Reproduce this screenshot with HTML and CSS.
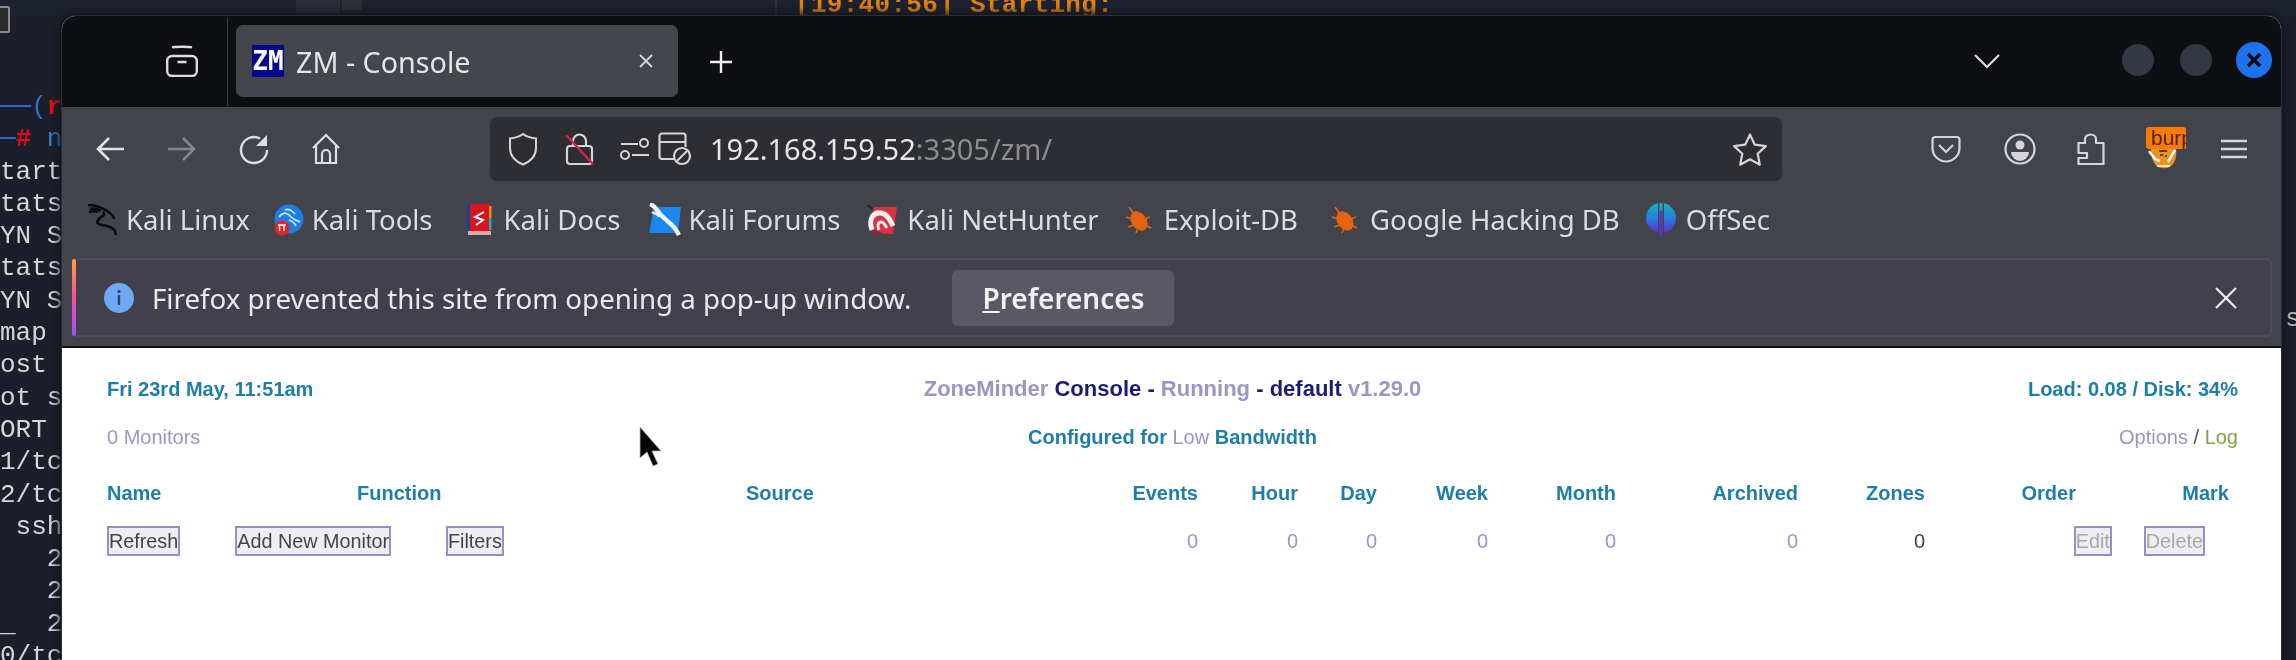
FILE: index.html
```html
<!DOCTYPE html>
<html lang="en">
<head>
<meta charset="utf-8">
<title>ZM - Console</title>
<link rel="stylesheet" href="styles.css">
</head>
<body>
<div class="desktop">
  <div class="term-top">
    <span class="term-box"></span>
    <span class="term-blot-a"></span>
    <span class="term-blot-b"></span>
    <span class="term-log">[19:40:56] Starting:</span>
  </div>
  <pre class="terminal"><span class="tl-blue">┌──(</span><span class="tl-red">root</span>
<span class="tl-blue">└─</span><span class="tl-red">#</span> <span class="tl-cmd">nmap</span>
Starting
Stats: 0
SYN Stealth
Stats: 0
SYN Stealth
Nmap scan
Host is
Not shown
PORT
21/tcp
22/tcp
| ssh-hostkey
|   2048
|   256
|_  256
80/tcp</pre>
  <span class="term-edge">s</span>

  <main class="window">
    <header class="tabbar">
      <svg class="ico-view" width="32" height="32" viewBox="0 0 32 32"><path d="M6 2.500C8 1.500 24 1.500 26 2.500" fill="none" stroke="#dcdcdc" stroke-width="2.400"/><rect x="1.200" y="11" width="29.600" height="20" rx="5" fill="none" stroke="#dcdcdc" stroke-width="2.400"/><path d="M11.500 17h9" stroke="#dcdcdc" stroke-width="2.400"/></svg>
      <span class="tab-sep"></span>
      <div class="tab">
        <span class="zm-icon">ZM</span>
        <span class="tab-title">ZM - Console</span>
        <svg class="tab-x" width="16" height="16" viewBox="0 0 16 16"><path d="M2 2l12 12M14 2L2 14" stroke="#d4d4d6" stroke-width="1.800"/></svg>
      </div>
      <svg class="tab-plus" width="24" height="24" viewBox="0 0 24 24"><path d="M12 1v22M1 12h22" stroke="#f0f0f0" stroke-width="2.400"/></svg>
      <svg class="tab-chevron" width="28" height="16" viewBox="0 0 28 16"><path d="M2 2l12 12L26 2" fill="none" stroke="#dedede" stroke-width="2.200"/></svg>
      <span class="win-dot"></span>
      <span class="win-dot win-dot-second"></span>
      <span class="win-close">
        <svg width="16" height="16" viewBox="0 0 16 16"><path d="M2 2l12 12M14 2L2 14" stroke="#0a0d18" stroke-width="3.600"/></svg>
      </span>
    </header>

    <div class="chrome">
      <nav class="navbar">
        <div class="nav-btns">
          <svg width="30" height="28" viewBox="0 0 30 28"><path d="M29 14H3M14 3L3 14l11 11" fill="none" stroke="#e2e2e4" stroke-width="2.600"/></svg>
          <svg width="30" height="28" viewBox="0 0 30 28"><path d="M1 14h26M16 3l11 11-11 11" fill="none" stroke="#85868b" stroke-width="2.600"/></svg>
          <svg width="30" height="32" viewBox="0 0 30 32"><path d="M21 5.500A13 13 0 1 0 28 17" fill="none" stroke="#dedee0" stroke-width="2.400"/><path d="M28 2v11H17z" fill="#dedee0"/></svg>
          <svg width="30" height="32" viewBox="0 0 30 32"><path d="M2 15L15 2l13 13M5 12v18h20V12M11 30V21a4 4 0 0 1 8 0v9" fill="none" stroke="#dedee0" stroke-width="2.200"/></svg>
        </div>
        <div class="urlbar">
          <svg width="30" height="34" viewBox="0 0 30 34"><path d="M15 2C11 5 6 6 2 6.500V16C2 25 9 30 15 32.500 21 30 28 25 28 16V6.500C24 6 19 5 15 2Z" fill="none" stroke="#d5d5d8" stroke-width="2"/></svg>
          <svg class="u-lock" width="30" height="34" viewBox="0 0 30 34"><path d="M9 14V9a6.500 6.500 0 0 1 13 0v5" fill="none" stroke="#d5d5d8" stroke-width="2.200"/><rect x="3" y="14" width="25" height="18" rx="3" fill="none" stroke="#d5d5d8" stroke-width="2.200"/><path d="M2 3l27 29" stroke="#d81f50" stroke-width="2.400"/></svg>
          <svg class="u-perm" width="30" height="26" viewBox="0 0 30 26"><path d="M1 8h17M12 19h17" stroke="#d5d5d8" stroke-width="2.200"/><circle cx="24" cy="7" r="4" fill="none" stroke="#d5d5d8" stroke-width="2"/><circle cx="5" cy="19" r="4" fill="none" stroke="#d5d5d8" stroke-width="2"/></svg>
          <svg class="u-pop" width="34" height="34" viewBox="0 0 34 34"><path d="M16 27H4a2.500 2.500 0 0 1-2.500-2.500V4A2.500 2.500 0 0 1 4 1.500h21A2.500 2.500 0 0 1 27.500 4v11M2 10h25" fill="none" stroke="#d5d5d8" stroke-width="2.200"/><circle cx="24" cy="24" r="8" fill="none" stroke="#d5d5d8" stroke-width="2.200"/><path d="M19 29l10-10" stroke="#d5d5d8" stroke-width="2.200"/></svg>
          <span class="url"><span class="url-host">192.168.159.52</span>:3305/zm/</span>
          <svg class="u-star" width="36" height="34" viewBox="0 0 36 34"><path d="M18 2.500l4.800 10.200 11 1.400-8.100 7.600 2.100 11L18 27.300 8.200 32.700l2.100-11-8.100-7.600 11-1.400z" fill="none" stroke="#d5d5d8" stroke-width="2.200" stroke-linejoin="round"/></svg>
        </div>
        <div class="nav-tools">
          <svg class="t-pocket" width="30" height="28" viewBox="0 0 30 28"><path d="M4 2h22a2.500 2.500 0 0 1 2.500 2.500V13a13.500 13.500 0 0 1-27 0V4.500A2.500 2.500 0 0 1 4 2z" fill="none" stroke="#d5d5d8" stroke-width="2.200"/><path d="M8 10l7 7 7-7" fill="none" stroke="#d5d5d8" stroke-width="2.200"/></svg>
          <svg class="t-account" width="32" height="32" viewBox="0 0 32 32"><circle cx="16" cy="16" r="14.500" fill="none" stroke="#d5d5d8" stroke-width="2.200"/><circle cx="16" cy="12" r="4.500" fill="#d5d5d8"/><path d="M7 19h18a9 9 0 0 1-18 0z" fill="#d5d5d8"/></svg>
          <svg class="t-ext" width="28" height="32" viewBox="0 0 28 32"><path d="M1.500 10H8V6a5.500 4.500 0 0 1 11 0v4h7.500v21H1.500v-6H10v-5H1.500z" fill="none" stroke="#d5d5d8" stroke-width="2.200" stroke-linejoin="round"/></svg>
          <div class="burp">
            <svg class="burp-face" width="30" height="22" viewBox="0 0 30 22"><path d="M3 0h25c1 9-1 15-5 18-4 3-10 3-14 0C5 15 3 9 3 0z" fill="#e8951f"/><path d="M1 3l6 8 5 2M27 2l-7 12" fill="none" stroke="#f5f5f5" stroke-width="2.600"/><path d="M9 18h13" stroke="#ffe6b8" stroke-width="2"/><path d="M11 3h8M12 7h3M17 8h2" stroke="#6b3a00" stroke-width="2"/></svg>
            <span class="burp-badge"><span class="burp-text">burp</span></span>
          </div>
          <svg class="t-menu" width="26" height="20" viewBox="0 0 26 20"><path d="M0 2h26M0 10h26M0 18h26" stroke="#d5d5d8" stroke-width="2.400"/></svg>
        </div>
      </nav>

      <div class="bookmarks">
        <a class="bm bm-linux">
          <svg width="32" height="32" viewBox="0 0 32 32"><path d="M1 1C8 1 14 3 20 7c3 2 7 5 7 8M3 5c4-1 8 0 11 2M2 8c4-1 7-1 9 0M16 8c3 3-1 4-4 7-3 3-2 5 3 6 6 1 11 2 13 6l1 4" fill="none" stroke="#0a0a0d" stroke-width="2.600"/></svg>
          <span>Kali Linux</span>
        </a>
        <a class="bm bm-tools">
          <svg width="30" height="32" viewBox="0 0 30 32"><circle cx="15" cy="15" r="14.500" fill="#1b7fe3"/><path d="M5 13c5-6 9-4 12 0 3 3 5 3 9 5M11 6c4-2 7 1 10 4M15 16c3 1 6 3 7 6" fill="none" stroke="#d9e9fb" stroke-width="1.700"/><circle cx="8" cy="24" r="7.500" fill="#e02525"/><path d="M5.500 21v6M10 21v6M4 21h8" stroke="#fff" stroke-width="1.500"/></svg>
          <span>Kali Tools</span>
        </a>
        <a class="bm bm-docs">
          <svg width="26" height="32" viewBox="0 0 26 32"><rect x="1" y="0" width="4" height="30" fill="#1b3f8f"/><rect x="4" y="0" width="20" height="27" fill="#d7161b"/><rect x="23" y="2" width="2.500" height="12" fill="#e28a26"/><rect x="23" y="14" width="2.500" height="12" fill="#2fa0c0"/><rect x="2" y="27" width="23" height="4" fill="#d9a8a8"/><path d="M18 8l-9 5 8 3-7 5" fill="none" stroke="#fff" stroke-width="2"/></svg>
          <span>Kali Docs</span>
        </a>
        <a class="bm bm-forums">
          <svg width="34" height="34" viewBox="0 0 34 34"><path d="M7 4h27l-3 26H2z" fill="#1a86f0"/><path d="M3 1c4 1 6 5 10 10 4 4 7 7 12 11 3 3 5 6 7 10" fill="none" stroke="#f2f2f2" stroke-width="4.500"/><path d="M5 9c3 2 6 1 7 5" fill="none" stroke="#f2f2f2" stroke-width="2.400"/></svg>
          <span>Kali Forums</span>
        </a>
        <a class="bm bm-hunter">
          <svg width="32" height="32" viewBox="0 0 32 32"><path d="M8 3h23l-4 27H5z" fill="#d9323f"/><path d="M5 30l1-6 12 6z" fill="#8c2233"/><path d="M6 26C2 14 8 8 15 9c6 1 9 6 12 13" fill="none" stroke="#f2eeee" stroke-width="5"/><path d="M13 26c-2-4-1-8 2-8 3 0 4 3 6 6" fill="none" stroke="#f2eeee" stroke-width="3"/><path d="M2 1l4 4" stroke="#222" stroke-width="2"/></svg>
          <span>Kali NetHunter</span>
        </a>
        <a class="bm bm-exploit">
          <svg width="28" height="30" viewBox="0 0 28 30"><ellipse cx="15" cy="16" rx="7.500" ry="10.500" fill="#e8620f" transform="rotate(-35 15 16)"/><path d="M5 2l5 7M2 12l6 2M4 22l6-2M12 28l2-5M26 12l-5 2M27 23l-6-3" stroke="#d9651a" stroke-width="1.800"/></svg>
          <span>Exploit-DB</span>
        </a>
        <a class="bm bm-ghdb">
          <svg width="28" height="30" viewBox="0 0 28 30"><ellipse cx="15" cy="16" rx="7.500" ry="10.500" fill="#e8620f" transform="rotate(-35 15 16)"/><path d="M5 2l5 7M2 12l6 2M4 22l6-2M12 28l2-5M26 12l-5 2M27 23l-6-3" stroke="#d9651a" stroke-width="1.800"/></svg>
          <span>Google Hacking DB</span>
        </a>
        <a class="bm bm-offsec">
          <svg width="30" height="34" viewBox="0 0 30 34"><defs><linearGradient id="off" x1="0" y1="0" x2="0" y2="1"><stop offset="0" stop-color="#12b4c4"/><stop offset=".55" stop-color="#2a78dc"/><stop offset="1" stop-color="#6a2ad0"/></linearGradient></defs><ellipse cx="15" cy="15" rx="15" ry="15" fill="url(#off)"/><path d="M12 0h1.500v30H12zM16.500 0H18v30h-1.500z" fill="#42444c"/><path d="M14 8h2v26h-2z" fill="#6a2ad0"/></svg>
          <span>OffSec</span>
        </a>
      </div>

      <section class="infobar">
        <span class="info-accent"></span>
        <svg class="info-ico" width="30" height="30" viewBox="0 0 30 30"><circle cx="15" cy="15" r="15" fill="#6fa8f5"/><path d="M15 12v10" stroke="#3b3e55" stroke-width="2.400"/><circle cx="15" cy="8.500" r="1.600" fill="#3b3e55"/></svg>
        <span class="info-text">Firefox prevented this site from opening a pop-up window.</span>
        <button class="info-btn"><u>P</u>references</button>
        <svg class="info-x" width="24" height="24" viewBox="0 0 24 24"><path d="M2 2l20 20M22 2L2 22" stroke="#eeeeee" stroke-width="2.200"/></svg>
      </section>
    </div>

    <section class="page">
      <div class="row">
        <span class="cell-l blue b">Fri 23rd May, 11:51am</span>
        <span class="cell-c title"><span class="lilac">ZoneMinder</span> <span class="navy b">Console</span> <span class="navy b">-</span> <span class="lilac">Running</span> <span class="navy b">-</span> <span class="navy b">default</span> <span class="lilac">v1.29.0</span></span>
        <span class="cell-r blue b">Load: 0.08 / Disk: 34%</span>
      </div>
      <div class="row row-two">
        <span class="cell-l lilac">0 Monitors</span>
        <span class="cell-c blue b">Configured for <span class="lilac-n">Low</span> Bandwidth</span>
        <span class="cell-r"><span class="lilac">Options</span> <span class="grey">/</span> <span class="green">Log</span></span>
      </div>
      <div class="mon-grid">
        <span class="h">Name</span>
        <span class="h">Function</span>
        <span class="h">Source</span>
        <span class="h r">Events</span>
        <span class="h r">Hour</span>
        <span class="h r">Day</span>
        <span class="h r">Week</span>
        <span class="h r">Month</span>
        <span class="h r">Archived</span>
        <span class="h r">Zones</span>
        <span class="h r">Order</span>
        <span class="h r">Mark</span>

        <div class="actions">
          <button class="zbtn">Refresh</button>
          <button class="zbtn">Add New Monitor</button>
          <button class="zbtn">Filters</button>
        </div>
        <span class="v r">0</span>
        <span class="v r">0</span>
        <span class="v r">0</span>
        <span class="v r">0</span>
        <span class="v r">0</span>
        <span class="v r">0</span>
        <span class="v r dark">0</span>
        <div class="actions-end">
          <button class="zbtn off" disabled>Edit</button>
          <button class="zbtn off" disabled>Delete</button>
        </div>
      </div>
      <svg class="cursor" width="26" height="42" viewBox="0 0 26 42"><path d="M2 1v31l7-6 6 14 5-2-6-13h9z" fill="#060606" stroke="#b9b9b9" stroke-width=".8"/></svg>
    </section>
  </main>
</div>
</body>
</html>
```

FILE: styles.css
```css
* { box-sizing: border-box; }
html, body { margin: 0; padding: 0; }
body { width: 2296px; height: 660px; overflow: hidden; background: #1c1f2b; }

.desktop {
  position: relative;
  width: 2296px;
  height: 660px;
  overflow: hidden;
  background: #1c1f2b;
  filter: blur(0.6px);
}

/* Terminal behind the browser window */
.term-top { position: absolute; left: 0; top: 0; width: 100%; height: 16px; background: #1e2230; }
.term-box { position: absolute; left: -8px; top: 6px; width: 18px; height: 27px; border: 2px solid #8a8a8a; border-radius: 2px; background: #2a2a2a; }
.term-blot-a { position: absolute; left: 296px; top: 0; width: 44px; height: 16px; background: #2a2d38; }
.term-blot-b { position: absolute; left: 342px; top: 0; width: 20px; height: 10px; background: #2e3038; }
.term-log {
  position: absolute; left: 795px; top: -10px;
  font: bold 26px/30px "Liberation Mono", monospace;
  letter-spacing: .3px;
  color: #e0820f;
  white-space: pre;
}
.term-log::before { content: ""; position: absolute; left: -20px; top: 0; width: 2px; height: 30px; background: #2b2f3d; }
.terminal {
  position: absolute; left: -15.6px; top: 91px; margin: 0;
  font: 26px/32.3px "Liberation Mono", monospace;
  color: #d6d6d6;
}
.tl-blue { color: #2f6fd0; }
.tl-red { color: #e01010; font-weight: bold; }
.tl-cmd { color: #2b86c5; }
.term-edge { position: absolute; left: 2285px; top: 303px; font: 26px/32px "Liberation Mono", monospace; color: #bdbdbd; }

/* Browser window */
.window {
  position: absolute; left: 62px; top: 16px;
  width: 2219px; height: 660px;
  display: flex; flex-direction: column;
  border-radius: 14px 14px 0 0;
  overflow: hidden;
  background: #fff;
  box-shadow: 0 0 0 1px #2b2d38, 0 0 8px 3px #12141c;
  font-family: "Noto Sans", sans-serif;
}
.tabbar {
  height: 91px; flex: none;
  display: flex; align-items: center;
  padding-left: 104px;
  background: #0e0f13;
}
.ico-view { flex: none; margin-top: -2px; }
.tab-sep { width: 1px; height: 88px; margin-left: 29px; background: #3a3b41; flex: none; }
.tab {
  width: 442px; height: 72px; margin-left: 8px; margin-top: -1px;
  display: flex; align-items: center;
  padding-left: 16px;
  border-radius: 7px;
  background: #44464d;
  color: #e4e4e6;
  flex: none;
}
.zm-icon {
  width: 32px; height: 32px; flex: none;
  background: #08088c; color: #fff;
  font: bold 26px/32px "DejaVu Sans Mono", monospace;
  text-align: center; overflow: hidden;
}
.tab-title { margin-left: 12px; font-size: 28.7px; line-height: 36px; white-space: nowrap; padding-top: 1px; }
.tab-x { margin-left: auto; margin-right: 24px; }
.tab-plus { margin-left: 31px; }
.tab-chevron { margin-left: auto; margin-top: -2px; }
.win-dot { width: 32px; height: 32px; margin-left: 121px; border-radius: 50%; background: #343846; margin-top: -3px; }
.win-dot-second { margin-left: 26px; }
.win-close {
  width: 36px; height: 36px; margin-left: 24px; margin-right: 9px; margin-top: -3px;
  border-radius: 50%; background: #1f72ee;
  display: flex; align-items: center; justify-content: center;
}

.chrome { flex: none; height: 241px; background: #42444c; display: flex; flex-direction: column; }
.navbar { height: 83px; flex: none; display: flex; align-items: center; padding-left: 33px; }
.nav-btns { width: 395px; flex: none; display: flex; align-items: center; gap: 42px; }
.urlbar {
  width: 1292px; height: 64px; flex: none; margin-top: 1px;
  display: flex; align-items: center;
  padding: 0 14px 0 18px;
  border-radius: 7px;
  background: #2d2e33;
}
.u-lock { margin-left: 26px; }
.u-perm { margin-left: 26px; }
.u-pop { margin-left: 8px; }
.url { margin-left: 18px; font-size: 29px; line-height: 36px; color: #8b8c90; white-space: nowrap; }
.url-host { color: #e6e6e8; }
.u-star { margin-left: auto; }
.nav-tools { position: relative; flex: 1; display: flex; align-items: center; padding-left: 149px; height: 64px; }
.t-account { margin-left: 43px; }
.t-ext { margin-left: 41px; }
.burp { position: relative; width: 40px; height: 42px; margin-left: 41px; margin-top: -1px; flex: none; }
.burp-face { position: absolute; left: 2px; top: 21px; }
.burp-badge {
  position: absolute; left: 0; top: 0; width: 40px; height: 22px;
  overflow: hidden; border-radius: 3px 3px 0 3px;
  background: #fb7a02;
}
.burp-text { display: block; margin-left: 5px; font: 21px/22px "Liberation Sans", sans-serif; color: #4a2400; white-space: nowrap; }
.t-menu { margin-left: 35px; }

.bookmarks { height: 60px; flex: none; display: flex; align-items: center; color: #dcdcde; font-size: 27.5px; }
.bm { display: flex; align-items: center; white-space: nowrap; flex: none; line-height: 36px; }
.bm-linux { margin-left: 25px; gap: 7px; }
.bm-tools { margin-left: 24px; gap: 8px; }
.bm-docs { margin-left: 33px; gap: 12px; }
.bm-forums { margin-left: 27px; gap: 7px; }
.bm-hunter { margin-left: 26px; gap: 9px; }
.bm-exploit { margin-left: 25px; gap: 12px; }
.bm-ghdb { margin-left: 32px; gap: 12px; }
.bm-offsec { margin-left: 26px; gap: 10px; }

.infobar {
  position: relative;
  height: 79px; margin: 8px 9px 0 10px; flex: none;
  display: flex; align-items: center;
  padding-left: 32px;
  border: 2px solid #4d4c58;
  border-left: 0;
  border-radius: 5px;
  background: #42404c;
  color: #e9e9eb;
  font-size: 27.7px;
}
.info-accent { position: absolute; left: 0; top: -1px; bottom: -1px; width: 4px; border-radius: 2px; background: linear-gradient(#ffa436, #ff4aa2 50%, #9a50ff); }
.info-ico { flex: none; }
.info-text { margin-left: 18px; white-space: nowrap; line-height: 36px; }
.info-btn {
  width: 222px; height: 56px; margin-left: 41px; flex: none;
  padding: 0; border: 0; border-radius: 6px;
  background: #5a5862; color: #f0f0f2;
  font: 600 28px/36px "Noto Sans", sans-serif;
}
.info-x { margin-left: auto; margin-right: 32px; }

/* ZoneMinder page */
.page {
  position: relative;
  flex: 1;
  border-top: 2px solid #101014;
  margin-top: -2px;
  padding: 30px 43px 0 45px;
  background: #fff;
  font: 20px/22px "Liberation Sans", Arial, sans-serif;
}
.row { display: grid; grid-template-columns: 1fr auto 1fr; align-items: center; height: 22px; white-space: nowrap; }
.row-two { margin-top: 26px; }
.cell-r { text-align: right; }
.title { font-size: 22px; }
.b { font-weight: bold; }
.blue { color: #1f7ea8; }
.navy { color: #1c1a78; }
.lilac { color: #9a96c4; font-weight: normal; }
.title .lilac { font-weight: bold; }
.lilac-n { color: #9a96c4; font-weight: normal; }
.grey { color: #555; }
.green { color: #7fa34a; }
.mon-grid {
  margin-top: 34px;
  display: grid;
  grid-template-columns: 250px 389px 354px 98px 100px 79px 111px 128px 182px 127px 151px 153px;
  row-gap: 22px;
  align-items: center;
}
.h { color: #1f7ea8; font-weight: bold; white-space: nowrap; }
.r { text-align: right; }
.v { color: #9a96c4; }
.v.dark { color: #444; }
.actions { grid-column: span 3; display: flex; gap: 55px; }
.actions-end { grid-column: span 2; display: flex; justify-content: flex-end; gap: 32px; padding-right: 24px; }
.zbtn {
  height: 30px; padding: 0; flex: none;
  border: 2px solid #9a8fc4;
  background: #eeedf1;
  color: #444;
  font: 19.8px/24px "Liberation Sans", Arial, sans-serif;
  white-space: nowrap;
  border-radius: 0;
}
.zbtn.off { color: #a8a8a8; }
.cursor { position: absolute; left: 576px; top: 78px; }
```
